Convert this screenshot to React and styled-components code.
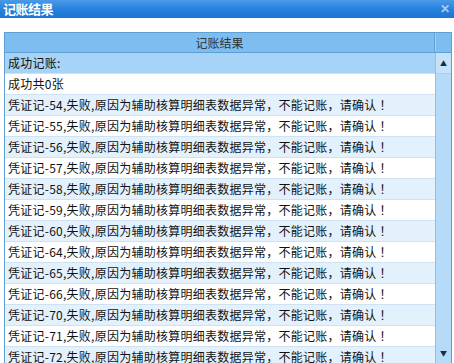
import React from 'react';
import styled, { createGlobalStyle } from 'styled-components';

const GlobalStyle = createGlobalStyle`
  html, body {
    margin: 0;
    padding: 0;
    background: #ffffff;
    overflow: hidden;
  }
  body {
    font-family: "Noto Sans CJK SC", "Liberation Sans", sans-serif;
  }
`;

const Window = styled.div`
  width: 454px;
  height: 363px;
  display: flex;
  flex-direction: column;
  background: #ffffff;
  overflow: hidden;
`;

const TitleBar = styled.div`
  height: 18px;
  flex-shrink: 0;
  display: flex;
  align-items: center;
  justify-content: space-between;
  padding: 0 4px 0 3px;
  background: linear-gradient(to bottom, #4a9ae8 0%, #2a84de 45%, #1c74d2 100%);
`;

const Title = styled.span`
  color: #ffffff;
  font-size: 13px;
  font-weight: bold;
  line-height: 18px;
  letter-spacing: -0.5px;
`;

const Close = styled.span`
  color: #a9cbee;
  font-family: "Liberation Sans", sans-serif;
  font-size: 12px;
  font-weight: bold;
  line-height: 18px;
`;

const Body = styled.div`
  flex: 1;
  min-height: 0;
  padding: 14px 2px 0 4px;
  display: flex;
`;

const Grid = styled.div`
  flex: 1;
  display: flex;
  flex-direction: column;
  border: 1px solid #5e9fd6;
  border-bottom: none;
  min-height: 0;
`;

const HeaderRow = styled.div`
  display: flex;
  height: 19px;
  flex-shrink: 0;
  background: #7dbdf0;
  border-bottom: 1px solid #5e9fd6;
`;

const HeaderCell = styled.div`
  flex: 1;
  text-align: center;
  font-size: 12px;
  line-height: 19px;
  color: #333;
  border-right: 1px solid #5e9fd6;
`;

const HeaderCorner = styled.div`
  width: 15px;
  border-left: 1px solid #a6d0f2;
`;

const Content = styled.div`
  flex: 1;
  display: flex;
  min-height: 0;
`;

const Rows = styled.div`
  flex: 1;
  display: flex;
  flex-direction: column;
  overflow: hidden;
`;

const Row = styled.div`
  height: 20px;
  flex-shrink: 0;
  padding-left: 3px;
  font-size: 12px;
  line-height: 20px;
  letter-spacing: 0.25px;
  color: #111;
  white-space: nowrap;
  border-bottom: 1px solid #cfe2f3;
  background: ${({ $selected, $alt }) =>
    $selected ? '#a6d3f6' : $alt ? '#e3f1fd' : '#ffffff'};
`;

const Bang = styled.span`
  margin-left: 3px;
`;

const ScrollBar = styled.div`
  width: 15px;
  flex-shrink: 0;
  display: flex;
  flex-direction: column;
  justify-content: space-between;
  background: #b6dbf8;
  border-left: 1px solid #8cc1ec;
`;

const ScrollBtn = styled.div`
  height: 20px;
  display: flex;
  align-items: center;
  justify-content: center;
  color: #1a2a3a;
  font-size: 7px;
  background: ${({ $top }) => ($top ? '#c4e2f9' : 'transparent')};
  border-bottom: ${({ $top }) => ($top ? '1px solid #a6d0f2' : 'none')};
`;

const ids = [54, 55, 56, 57, 58, 59, 60, 64, 65, 66, 70, 71, 72];

const App = () => {
  return (
    <Window>
      <GlobalStyle />
      <TitleBar>
        <Title>记账结果</Title>
        <Close>✕</Close>
      </TitleBar>
      <Body>
        <Grid>
          <HeaderRow>
            <HeaderCell>记账结果</HeaderCell>
            <HeaderCorner />
          </HeaderRow>
          <Content>
            <Rows>
              <Row $selected>成功记账:</Row>
              <Row>成功共0张</Row>
              {ids.map((n, i) => (
                <Row key={n} $alt={i % 2 === 0}>
                  凭证记-{n},失败,原因为辅助核算明细表数据异常，不能记账，请确认<Bang>！</Bang>
                </Row>
              ))}
            </Rows>
            <ScrollBar>
              <ScrollBtn $top>▲</ScrollBtn>
              <ScrollBtn>▼</ScrollBtn>
            </ScrollBar>
          </Content>
        </Grid>
      </Body>
    </Window>
  );
};

export default App;
